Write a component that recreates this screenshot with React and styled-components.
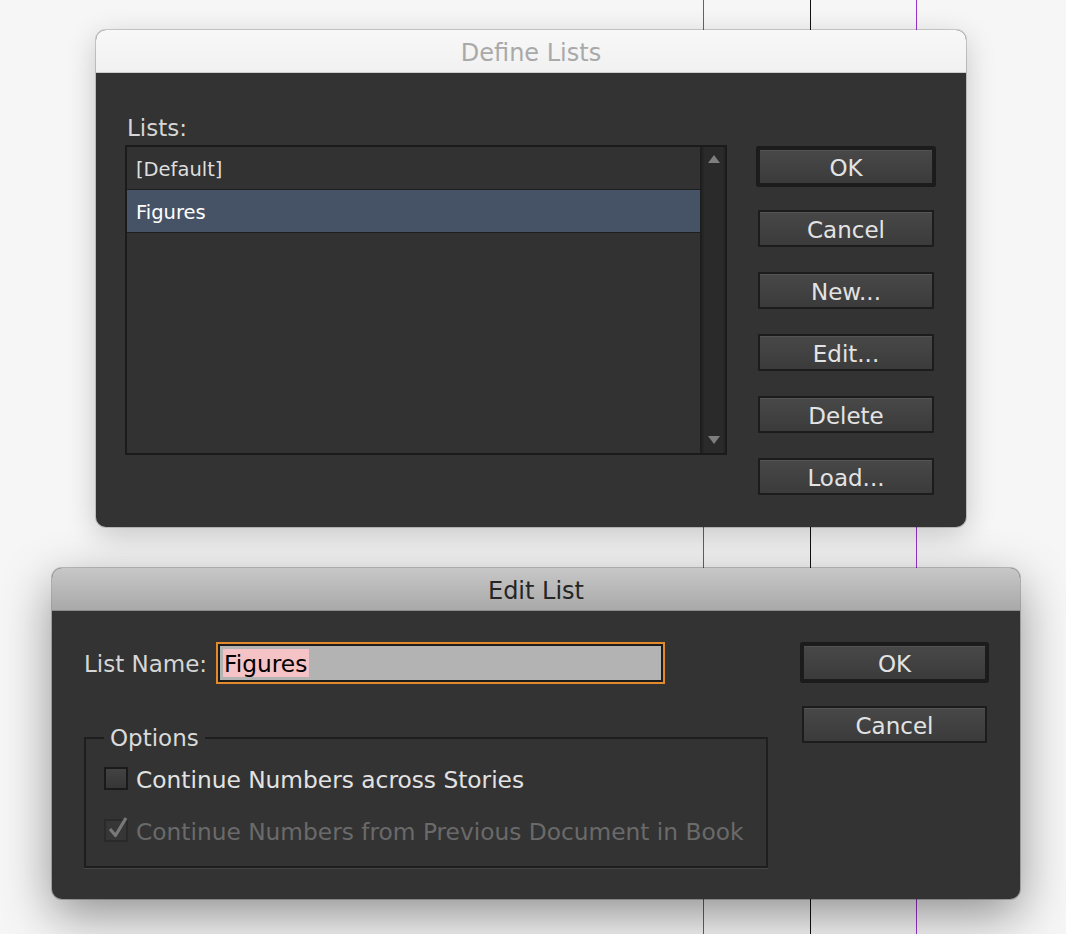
import React from "react";
import styled, { createGlobalStyle } from "styled-components";

const GlobalStyle = createGlobalStyle`
  html, body {
    margin: 0;
    padding: 0;
  }
  body {
    font-family: "DejaVu Sans", "Liberation Sans", sans-serif;
    background: #f5f5f5;
  }
`;

// page with the three ruler guides running behind the dialogs
const Canvas = styled.div`
  width: 1066px;
  height: 934px;
  overflow: hidden;
  box-sizing: border-box;
  padding-top: 30px;
  display: flex;
  flex-direction: column;
  align-items: flex-start;
  background-color: #f6f6f6;
  background-image: linear-gradient(
    to right,
    transparent 703px, #9a33cf 703px, #9a33cf 704px, transparent 704px,
    transparent 810px, #111111 810px, #111111 811px, transparent 811px,
    transparent 916px, #9a33cf 916px, #9a33cf 917px, transparent 917px
  );
`;

const Dialog = styled.div`
  width: ${p => p.$width}px;
  margin-left: ${p => p.$left}px;
  margin-top: ${p => p.$top || 0}px;
  border-radius: 10px;
  overflow: hidden;
  background: #333333;
  box-shadow: ${p => p.$active
    ? "0 16px 50px rgba(0,0,0,0.42), 0 0 0 1px rgba(0,0,0,0.22)"
    : "0 8px 30px rgba(0,0,0,0.2), 0 0 0 1px rgba(0,0,0,0.16)"};
`;

const TitleBar = styled.div`
  height: 43px;
  box-sizing: border-box;
  padding-top: 3px;
  display: flex;
  align-items: center;
  justify-content: center;
  font-size: 24px;
  color: ${p => p.$active ? "#252525" : "#a9a9a9"};
  background: ${p => p.$active
    ? "linear-gradient(#c7c7c7, #a9a9a9)"
    : "linear-gradient(#f8f8f8, #f1f1f1)"};
  border-bottom: 1px solid ${p => p.$active ? "#8c8c8c" : "#cdcdcd"};
`;

const Body = styled.div`
  display: flex;
  align-items: flex-start;
  justify-content: space-between;
  padding: ${p => p.$pad};
`;

const Column = styled.div`
  width: ${p => p.$width}px;
  display: flex;
  flex-direction: column;
  padding-top: ${p => p.$top || 0}px;
`;

const ButtonStack = styled.div`
  width: ${p => p.$width}px;
  display: flex;
  flex-direction: column;
  gap: 25px;
  padding-top: ${p => p.$top || 0}px;
`;

const Button = styled.button`
  width: 100%;
  height: 37px;
  box-sizing: border-box;
  padding: 3px 0 0;
  border: 2px solid #1c1c1c;
  border-radius: 1px;
  background: linear-gradient(#484848, #3b3b3b);
  box-shadow: inset 0 1px 0 rgba(255, 255, 255, 0.07)${p => p.$primary ? ", 0 0 0 2px #1b1b1b" : ""};
  color: #e3e3e3;
  font-family: inherit;
  font-size: 23px;
  line-height: 1;
`;

const Label = styled.div`
  font-size: 23px;
  line-height: 26px;
  padding: 2px 0 0 ${p => p.$indent || 0}px;
  color: #d6d6d6;
  margin-bottom: ${p => p.$gap || 0}px;
  width: ${p => (p.$width ? `${p.$width}px` : "auto")};
  box-sizing: border-box;
  flex-shrink: 0;
`;

const ListBox = styled.div`
  height: 310px;
  box-sizing: border-box;
  display: flex;
  border: 2px solid #1b1b1b;
  background: #323232;
`;

const Rows = styled.div`
  flex: 1;
  display: flex;
  flex-direction: column;
`;

const Row = styled.div`
  height: 43px;
  box-sizing: border-box;
  display: flex;
  align-items: center;
  padding: 2px 0 0 9px;
  font-size: 19.5px;
  border-bottom: 1px solid #1e1e1e;
  color: ${p => p.$selected ? "#ffffff" : "#dedede"};
  background: ${p => p.$selected ? "#465366" : "transparent"};
`;

const ScrollTrack = styled.div`
  width: 25px;
  box-sizing: border-box;
  display: flex;
  flex-direction: column;
  align-items: center;
  justify-content: space-between;
  padding: 8px 0 9px;
  border-left: 2px solid #1e1e1e;
  background: #2a2a2a;
  box-shadow: inset 2px 0 0 #262626, inset -2px 0 0 #262626;
`;

const Arrow = styled.div`
  width: 0;
  height: 0;
  border-left: 6px solid transparent;
  border-right: 6px solid transparent;
  ${p => p.$down ? "border-top: 8px solid #7e7e7e;" : "border-bottom: 8px solid #7e7e7e;"}
`;

const NameRow = styled.div`
  display: flex;
  align-items: center;
  height: 42px;
`;

const NameInput = styled.div`
  width: 449px;
  height: 42px;
  box-sizing: border-box;
  display: flex;
  align-items: center;
  padding-left: 5px;
  border: 2px solid #e38a2d;
  box-shadow: inset 0 0 0 2px #1c1c1c;
  background: #b3b3b3;
`;

const Selected = styled.span`
  font-size: 23.3px;
  line-height: 27px;
  padding: 1px 2px 0 1px;
  color: #000000;
  background: #f5c2c6;
`;

const Group = styled.fieldset`
  margin: 41px 0 0;
  padding: 12px 0 21px 18px;
  min-width: 0;
  border: 2px solid #1e1e1e;
  box-shadow: 0 1px 0 #454545;
  display: flex;
  flex-direction: column;
  gap: 22px;
`;

const Legend = styled.legend`
  padding: 0 6px;
  font-size: 23px;
  line-height: 26px;
  color: #dadada;
`;

const CheckRow = styled.div`
  display: flex;
  align-items: center;
  gap: 8px;
  height: 30px;
  font-size: 23.3px;
  color: ${p => p.$disabled ? "#6a6a6a" : "#e2e2e2"};
`;

const CheckText = styled.span`
  padding-top: 3px;
`;

const Box = styled.div`
  position: relative;
  width: 24px;
  height: 23px;
  box-sizing: border-box;
  flex-shrink: 0;
  border: 2px solid ${p => p.$disabled ? "#2a2a2a" : "#1a1a1a"};
  background: ${p => p.$disabled
    ? "#363636"
    : "linear-gradient(#434343, #363636)"};
`;

const Check = styled.svg`
  position: absolute;
  left: 1px;
  top: -5px;
`;

const Checkbox = ({ checked, disabled, children }) => (
  <CheckRow $disabled={disabled}>
    <Box $disabled={disabled}>
      {checked && (
        <Check width="22" height="24" viewBox="0 0 22 24">
          <path d="M3 13 L8.5 19.5 L19 2" fill="none" stroke="#787878" strokeWidth="3.2" strokeLinejoin="round" />
        </Check>
      )}
    </Box>
    <CheckText>{children}</CheckText>
  </CheckRow>
);

const DefineLists = () => (
  <Dialog $width={870} $left={96}>
    <TitleBar>Define Lists</TitleBar>
    <Body $pad="40px 32px 32px 29px">
      <Column $width={602}>
        <Label $gap={4} $indent={2}>Lists:</Label>
        <ListBox>
          <Rows>
            <Row>[Default]</Row>
            <Row $selected>Figures</Row>
          </Rows>
          <ScrollTrack>
            <Arrow />
            <Arrow $down />
          </ScrollTrack>
        </ListBox>
      </Column>
      <ButtonStack $width={176} $top={35}>
        <Button $primary>OK</Button>
        <Button>Cancel</Button>
        <Button>New...</Button>
        <Button>Edit...</Button>
        <Button>Delete</Button>
        <Button>Load...</Button>
      </ButtonStack>
    </Body>
  </Dialog>
);

const EditList = () => (
  <Dialog $width={968} $left={52} $top={41} $active>
    <TitleBar $active>Edit List</TitleBar>
    <Body $pad="31px 33px 31px 32px">
      <Column $width={684}>
        <NameRow>
          <Label $width={132}>List Name:</Label>
          <NameInput>
            <Selected>Figures</Selected>
          </NameInput>
        </NameRow>
        <Group>
          <Legend>Options</Legend>
          <Checkbox>Continue Numbers across Stories</Checkbox>
          <Checkbox checked disabled>Continue Numbers from Previous Document in Book</Checkbox>
        </Group>
      </Column>
      <ButtonStack $width={185} $top={2}>
        <Button $primary>OK</Button>
        <Button>Cancel</Button>
      </ButtonStack>
    </Body>
  </Dialog>
);

export default function App() {
  return (
    <>
      <GlobalStyle />
      <Canvas>
        <DefineLists />
        <EditList />
      </Canvas>
    </>
  );
}
